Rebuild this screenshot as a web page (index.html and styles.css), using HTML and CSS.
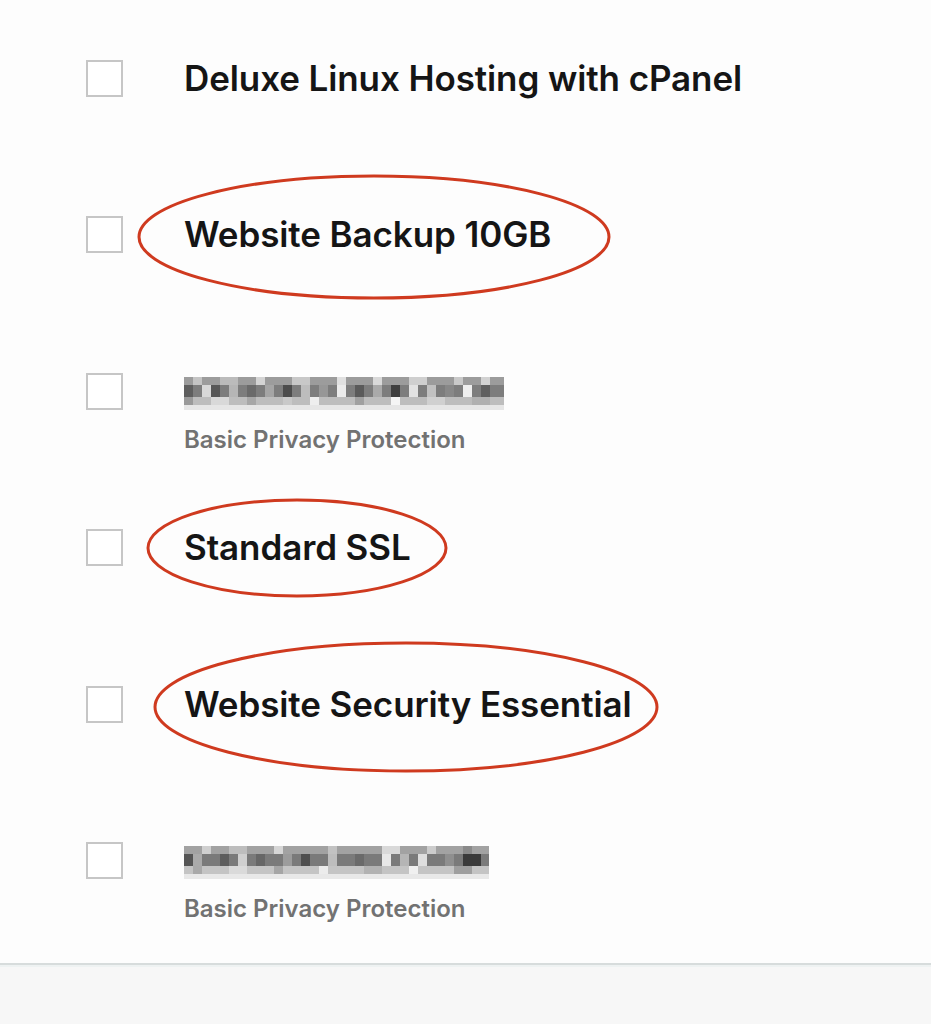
FILE: index.html
```html
<!DOCTYPE html>
<html lang="en">
<head>
<meta charset="utf-8">
<title>Cart items</title>
<link rel="stylesheet" href="styles.css">
</head>
<body>
<main class="page">
  <ul class="items">
    <li class="item">
      <span class="check"></span>
      <div class="label"><div class="title">Deluxe Linux Hosting with cPanel</div></div>
    </li>
    <li class="item">
      <span class="check"></span>
      <div class="label"><div class="title">Website Backup 10GB</div></div>
    </li>
    <li class="item">
      <span class="check"></span>
      <div class="label">
        <svg class="blur" width="320" height="34" viewBox="0 0 320 34" aria-label="hidden domain">
          <rect x="0" y="0" width="320" height="8" fill="#9c9c9c"/>
          <rect x="0" y="8" width="320" height="12" fill="#7d7d7d"/>
          <rect x="0" y="20" width="320" height="8" fill="#bdbdbd"/>
          <rect x="0" y="28" width="320" height="5" fill="#e6e6e6"/>
          <rect x="9" y="0" width="9" height="8" fill="#c4c4c4"/><rect x="36" y="0" width="18" height="8" fill="#bbb"/><rect x="72" y="0" width="9" height="8" fill="#d4d4d4"/><rect x="108" y="0" width="18" height="8" fill="#c8c8c8"/><rect x="153" y="0" width="9" height="8" fill="#e0e0e0"/><rect x="189" y="0" width="9" height="8" fill="#d9d9d9"/><rect x="225" y="0" width="18" height="8" fill="#cfcfcf"/><rect x="270" y="0" width="9" height="8" fill="#c9c9c9"/><rect x="297" y="0" width="9" height="8" fill="#d2d2d2"/>
          <rect x="0" y="8" width="9" height="12" fill="#5e5e5e"/><rect x="18" y="8" width="9" height="12" fill="#d8d8d8"/><rect x="27" y="8" width="9" height="12" fill="#575757"/><rect x="45" y="8" width="9" height="12" fill="#b5b5b5"/><rect x="63" y="8" width="9" height="12" fill="#6a6a6a"/><rect x="81" y="8" width="9" height="12" fill="#a5a5a5"/><rect x="99" y="8" width="9" height="12" fill="#4c4c4c"/><rect x="117" y="8" width="9" height="12" fill="#bdbdbd"/><rect x="135" y="8" width="9" height="12" fill="#979797"/><rect x="153" y="8" width="9" height="12" fill="#ebebeb"/><rect x="171" y="8" width="9" height="12" fill="#5a5a5a"/><rect x="189" y="8" width="9" height="12" fill="#aaaaaa"/><rect x="207" y="8" width="9" height="12" fill="#3f3f3f"/><rect x="225" y="8" width="9" height="12" fill="#e2e2e2"/><rect x="243" y="8" width="9" height="12" fill="#c1c1c1"/><rect x="261" y="8" width="9" height="12" fill="#888"/><rect x="279" y="8" width="9" height="12" fill="#eee"/><rect x="297" y="8" width="9" height="12" fill="#5f5f5f"/>
          <rect x="0" y="20" width="9" height="8" fill="#9a9a9a"/><rect x="27" y="20" width="18" height="8" fill="#d9d9d9"/><rect x="63" y="20" width="9" height="8" fill="#a7a7a7"/><rect x="99" y="20" width="9" height="8" fill="#c9c9c9"/><rect x="126" y="20" width="9" height="8" fill="#eeeeee"/><rect x="171" y="20" width="9" height="8" fill="#a0a0a0"/><rect x="207" y="20" width="9" height="8" fill="#f5f5f5"/><rect x="243" y="20" width="18" height="8" fill="#d0d0d0"/><rect x="288" y="20" width="18" height="8" fill="#b0b0b0"/>
        </svg>
        <div class="sub">Basic Privacy Protection</div>
      </div>
    </li>
    <li class="item">
      <span class="check"></span>
      <div class="label"><div class="title">Standard SSL</div></div>
    </li>
    <li class="item">
      <span class="check"></span>
      <div class="label"><div class="title">Website Security Essential</div></div>
    </li>
    <li class="item">
      <span class="check"></span>
      <div class="label">
        <svg class="blur" width="305" height="34" viewBox="0 0 305 34" aria-label="hidden domain">
          <rect x="0" y="0" width="305" height="8" fill="#a2a2a2"/>
          <rect x="0" y="8" width="305" height="12" fill="#7a7a7a"/>
          <rect x="0" y="20" width="305" height="8" fill="#c4c4c4"/>
          <rect x="0" y="28" width="305" height="5" fill="#e8e8e8"/>
          <rect x="18" y="0" width="9" height="8" fill="#cfcfcf"/><rect x="45" y="0" width="18" height="8" fill="#bdbdbd"/><rect x="90" y="0" width="9" height="8" fill="#d6d6d6"/><rect x="144" y="0" width="9" height="8" fill="#c2c2c2"/><rect x="198" y="0" width="18" height="8" fill="#d9d9d9"/><rect x="243" y="0" width="9" height="8" fill="#cccccc"/><rect x="279" y="0" width="9" height="8" fill="#8a8a8a"/>
          <rect x="0" y="8" width="9" height="12" fill="#555"/><rect x="9" y="8" width="9" height="12" fill="#aaa"/><rect x="36" y="8" width="9" height="12" fill="#5d5d5d"/><rect x="54" y="8" width="9" height="12" fill="#cfcfcf"/><rect x="72" y="8" width="9" height="12" fill="#666"/><rect x="99" y="8" width="9" height="12" fill="#9c9c9c"/><rect x="117" y="8" width="9" height="12" fill="#4e4e4e"/><rect x="144" y="8" width="9" height="12" fill="#bdbdbd"/><rect x="171" y="8" width="9" height="12" fill="#6a6a6a"/><rect x="198" y="8" width="9" height="12" fill="#e8e8e8"/><rect x="216" y="8" width="9" height="12" fill="#b5b5b5"/><rect x="234" y="8" width="9" height="12" fill="#dedede"/><rect x="261" y="8" width="9" height="12" fill="#8f8f8f"/><rect x="279" y="8" width="18" height="12" fill="#3a3a3a"/>
          <rect x="9" y="20" width="9" height="8" fill="#a9a9a9"/><rect x="45" y="20" width="18" height="8" fill="#dadada"/><rect x="90" y="20" width="9" height="8" fill="#a5a5a5"/><rect x="135" y="20" width="9" height="8" fill="#ececec"/><rect x="180" y="20" width="18" height="8" fill="#b2b2b2"/><rect x="225" y="20" width="9" height="8" fill="#f0f0f0"/><rect x="270" y="20" width="18" height="8" fill="#9e9e9e"/>
        </svg>
        <div class="sub">Basic Privacy Protection</div>
      </div>
    </li>
  </ul>
  <footer class="foot"></footer>

  <svg class="marks" width="931" height="1024" viewBox="0 0 931 1024" aria-hidden="true">
    <ellipse cx="374" cy="237" rx="235" ry="61" />
    <ellipse cx="297" cy="548" rx="149" ry="48" />
    <ellipse cx="406" cy="707" rx="251" ry="64" />
  </svg>
</main>
</body>
</html>
```
FILE: styles.css
```css
* { box-sizing: border-box; }
html, body { margin: 0; padding: 0; }
body {
  background: #fdfdfd;
  font-family: Inter, "Open Sans", "Liberation Sans", sans-serif;
  color: #111;
}
.page {
  position: relative;
  width: 931px;
  height: 1024px;
  overflow: hidden;
  display: flex;
  flex-direction: column;
}
.items {
  list-style: none;
  margin: 0;
  padding: 60px 0 0 86px;
  display: grid;
  grid-auto-rows: 156.4px;
  height: 963px;
}
.item {
  display: flex;
  align-items: flex-start;
  gap: 61px;
}
.check {
  flex: none;
  width: 37px;
  height: 37px;
  border: 2px solid #c6c6c6;
  background: #fff;
}
.label {
  display: flex;
  flex-direction: column;
}
.title {
  font-weight: 600;
  font-size: 35px;
  line-height: 37px;
  color: #151515;
  letter-spacing: -0.1px;
}
.blur {
  display: block;
  margin-top: 4px;
}
.sub {
  margin-top: 15px;
  font-size: 24px;
  font-weight: 600;
  color: #727272;
  line-height: 28px;
}
.foot {
  flex: 1;
  background: #f7f7f7;
  border-top: 2px solid #d7dcdc;
  box-shadow: inset 0 2px 0 #eef2f2;
}
.marks {
  position: absolute;
  left: 0;
  top: 0;
  pointer-events: none;
}
.marks ellipse {
  fill: none;
  stroke: #cf3a1f;
  stroke-width: 3;
}
```
